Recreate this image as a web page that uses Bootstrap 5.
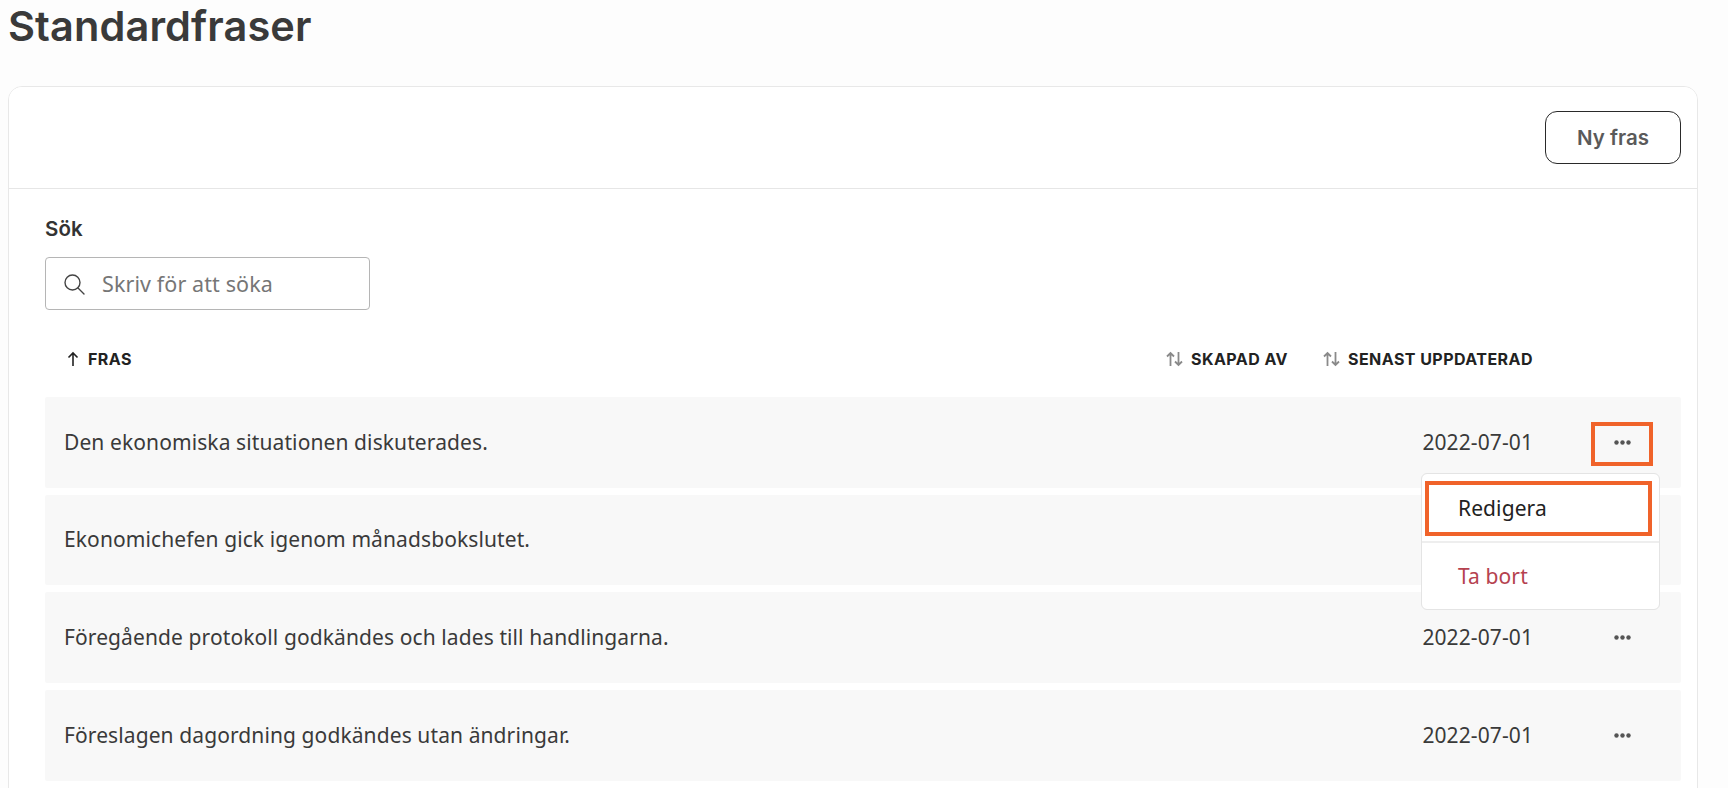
<!doctype html>
<html lang="sv">

<head>
    <meta charset="utf-8">
    <meta name="viewport" content="width=device-width, initial-scale=1">
    <title>Standardfraser</title>

    <link href="https://cdn.jsdelivr.net/npm/bootstrap@5.3.3/dist/css/bootstrap.min.css" rel="stylesheet">
    <style>
        html, body {
            height: 788px;
            overflow: hidden;
        }

        body {
            background-color: #fdfdfd;
            color: #3a3a3a;
            font-family: "Noto Sans", sans-serif;
            font-size: 21px;
            letter-spacing: 0.1px;
            padding: 0 30px 0 8px;
        }

        .page-title {
            font-family: Inter, sans-serif;
            font-size: 41.500px;
            font-weight: 600;
            line-height: 52px;
            color: #3a3a3a;
            margin: 0 0 34px 0;
        }

        .phrase-card {
            --bs-card-border-color: #e8e8e8;
            --bs-card-border-radius: 14px;
            --bs-card-inner-border-radius: 13px;
            background: #fff;
        }

        .phrase-head {
            height: 102px;
            padding: 24px 16px 0 0;
            background: #fff;
            border-color: #e6e6e6;
        }

        .new-btn {
            width: 136px;
            height: 53px;
            padding-top: 8px;
            border: 1px solid #2a2a2a;
            border-radius: 12px;
            font-family: Inter, sans-serif;
            font-size: 20.500px;
            font-weight: 600;
            color: #5a5a5a;
            background: #fff;
        }

        .phrase-body {
            padding: 28px 16px 60px 36px;
        }

        .search-label {
            font-family: Inter, sans-serif;
            font-size: 20.500px;
            font-weight: 600;
            line-height: 24px;
            margin-bottom: 16px;
            color: #333;
        }

        .search-box {
            width: 325px;
            height: 53px;
        }

        .search-box svg {
            left: 18px;
            top: 16px;
        }

        .search-box .form-control {
            height: 53px;
            padding-left: 56px;
            border-color: #b5b5b5;
            border-radius: 4px;
            font-size: 21.500px;
            letter-spacing: 0.1px;
            color: #333;
        }

        .search-box .form-control::placeholder {
            color: #767676;
        }

        .sort-row {
            height: 87px;
            padding: 11px 0 0 21px;
            font-family: Inter, sans-serif;
            font-size: 16px;
            font-weight: 700;
            letter-spacing: 0.45px;
            color: #222;
        }

        .sort-row svg {
            flex: none;
        }

        .col-created {
            width: 120px;
        }

        .col-updated {
            width: 210px;
            margin-left: 37px;
        }

        .col-action {
            width: 148px;
        }

        .phrase-row {
            height: 90.700px;
            margin-bottom: 7px;
            padding-left: 19px;
            background: #f8f8f8;
            border-radius: 2px;
        }

        .kebab-btn {
            width: 62px;
            height: 44px;
            margin: 4px 0 0 58px;
            padding: 0 0 4px;
            border: 4px solid transparent;
            border-radius: 0;
            background: transparent;
        }

        .outlined {
            border: 4px solid #f0632a;
        }

        .row-menu {
            top: 76px;
            right: 21px;
            width: 239px;
            min-width: 0;
            height: 137px;
            padding: 7px 7px 0 3px;
            border-color: #e4e4e4;
            border-radius: 6px;
            font-size: 21px;
        }

        .row-menu .dropdown-item {
            padding-left: 29px;
            color: #222;
        }

        .row-menu .item-edit {
            height: 55px;
            line-height: 47px;
            padding-top: 0;
            padding-bottom: 0;
            background: #fff;
        }

        .row-menu .dropdown-divider {
            margin: 5px -7px 0 -3px;
            border-top: 2px solid #eee;
            opacity: 1;
        }

        .row-menu .item-delete {
            height: 66px;
            line-height: 66px;
            padding: 0 0 0 33px;
            color: #b5424f;
        }
    </style>
</head>

<body>
    <h1 class="page-title">Standardfraser</h1>

    <div class="card phrase-card">
        <div class="card-header phrase-head d-flex justify-content-end align-items-start">
            <button type="button" class="btn new-btn">Ny fras</button>
        </div>

        <div class="card-body phrase-body">
            <div class="search-label">Sök</div>
            <div class="search-box position-relative">
                <svg class="position-absolute" width="22" height="22" viewBox="0 0 22 22" fill="none" stroke="#444" stroke-width="1.4" stroke-linecap="round">
                    <circle cx="9.500" cy="9.500" r="7.500" />
                    <path d="M15 15l6 6" />
                </svg>
                <input type="text" class="form-control" placeholder="Skriv för att söka">
            </div>

            <div class="sort-row d-flex align-items-center">
                <div class="flex-grow-1 d-flex align-items-center gap-2">
                    <svg width="14" height="16" viewBox="0 0 14 16" fill="none" stroke="#222" stroke-width="1.6"><path d="M7 15V2M2.500 6.500L7 2l4.500 4.500" /></svg>
                    FRAS
                </div>
                <div class="col-created d-flex align-items-center gap-2">
                    <svg width="17" height="16" viewBox="0 0 17 16" fill="none" stroke="#8a8a8a" stroke-width="1.8"><path d="M4.500 15V2M1 5.500L4.500 2 8 5.500M12.500 1v13M9 10.500l3.500 3.500 3.500-3.500" /></svg>
                    <span class="text-nowrap">SKAPAD AV</span>
                </div>
                <div class="col-updated d-flex align-items-center gap-2">
                    <svg width="17" height="16" viewBox="0 0 17 16" fill="none" stroke="#8a8a8a" stroke-width="1.8"><path d="M4.500 15V2M1 5.500L4.500 2 8 5.500M12.500 1v13M9 10.500l3.500 3.500 3.500-3.500" /></svg>
                    <span class="text-nowrap">SENAST UPPDATERAD</span>
                </div>
                <div class="col-action"></div>
            </div>

            <div class="phrase-row d-flex align-items-center position-relative">
                <div class="flex-grow-1">Den ekonomiska situationen diskuterades.</div>
                <div class="col-created"></div>
                <div class="col-updated text-end">2022-07-01</div>
                <div class="col-action">
                    <button type="button" class="btn kebab-btn outlined d-flex align-items-center justify-content-center" aria-label="Fler val">
                        <svg width="17" height="5" viewBox="0 0 17 5" fill="#555"><circle cx="2.500" cy="2.500" r="2.200" /><circle cx="8.500" cy="2.500" r="2.200" /><circle cx="14.500" cy="2.500" r="2.200" /></svg>
                    </button>
                </div>
                <div class="dropdown-menu show row-menu">
                    <a class="dropdown-item item-edit outlined" href="#">Redigera</a>
                    <hr class="dropdown-divider">
                    <a class="dropdown-item item-delete" href="#">Ta bort</a>
                </div>
            </div>

            <div class="phrase-row d-flex align-items-center">
                <div class="flex-grow-1">Ekonomichefen gick igenom månadsbokslutet.</div>
            </div>

            <div class="phrase-row d-flex align-items-center">
                <div class="flex-grow-1">Föregående protokoll godkändes och lades till handlingarna.</div>
                <div class="col-created"></div>
                <div class="col-updated text-end">2022-07-01</div>
                <div class="col-action">
                    <button type="button" class="btn kebab-btn d-flex align-items-center justify-content-center" aria-label="Fler val">
                        <svg width="17" height="5" viewBox="0 0 17 5" fill="#555"><circle cx="2.500" cy="2.500" r="2.200" /><circle cx="8.500" cy="2.500" r="2.200" /><circle cx="14.500" cy="2.500" r="2.200" /></svg>
                    </button>
                </div>
            </div>

            <div class="phrase-row d-flex align-items-center">
                <div class="flex-grow-1">Föreslagen dagordning godkändes utan ändringar.</div>
                <div class="col-created"></div>
                <div class="col-updated text-end">2022-07-01</div>
                <div class="col-action">
                    <button type="button" class="btn kebab-btn d-flex align-items-center justify-content-center" aria-label="Fler val">
                        <svg width="17" height="5" viewBox="0 0 17 5" fill="#555"><circle cx="2.500" cy="2.500" r="2.200" /><circle cx="8.500" cy="2.500" r="2.200" /><circle cx="14.500" cy="2.500" r="2.200" /></svg>
                    </button>
                </div>
            </div>
        </div>
    </div>

    <script src="https://cdn.jsdelivr.net/npm/bootstrap@5.3.3/dist/js/bootstrap.bundle.min.js"></script>
</body>

</html>
